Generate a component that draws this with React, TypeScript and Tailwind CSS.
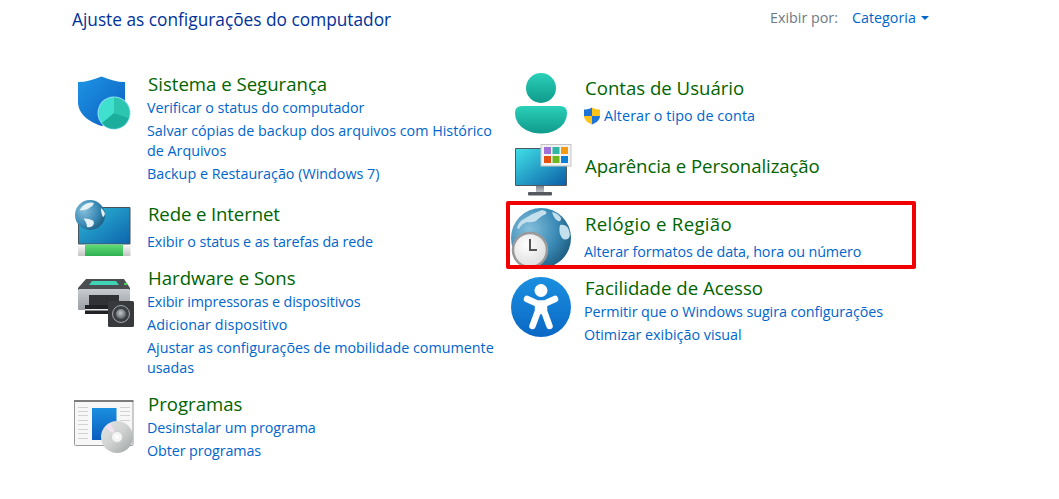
import React from "react";

const Title = ({ children, className = "" }: { children: React.ReactNode; className?: string }) => (
  <div className={"text-[18.6px] leading-[24px] text-[#006400] ml-[1px] " + className}>{children}</div>
);
const L = ({ children, className = "" }: { children: React.ReactNode; className?: string }) => (
  <div className={"text-[14.33px] leading-[20px] text-[#0066cc] mt-[3px] " + className}>{children}</div>
);

const clockLand = [
  "M6 20 Q8 13 13 11 Q22 5 31 2 Q37 3 35 6 Q30 8 27 11 Q24 15 16 14 Q10 16 8 21Z",
  "M41 4 Q47 5 50 10 Q50 14 47 13 Q43 11 41 4Z",
  "M49 17 Q54 16 57 20 Q60 26 58 30 Q54 33 51 30 Q47 24 49 17Z",
];
const netLand = [
  "M9 21 Q14 11 23 7 Q32 4 38 6 Q36 12 31 14 Q26 20 19 20 Q13 20 9 21Z",
  "M17 37 Q26 36 36 41 Q40 46 35 52 Q28 56 24 54 Q24 46 17 37Z",
  "M52 16 Q58 20 60 27 Q59 33 56 34 Q52 28 52 16Z",
];

const Globe = ({ cx, cy, r, id, land, landFill }: { cx: number; cy: number; r: number; id: string; land: string[]; landFill: string }) => (
  <g>
    <defs>
      <radialGradient id={id} cx="0.3" cy="0.35" r="0.85">
        <stop offset="0" stopColor="#86bfdb" />
        <stop offset="0.55" stopColor="#3a8ab6" />
        <stop offset="1" stopColor="#154f70" />
      </radialGradient>
    </defs>
    <circle cx={cx} cy={cy} r={r} fill={`url(#${id})`} />
    <g fill={landFill} transform={`translate(${cx} ${cy}) scale(${r / 30}) translate(-30 -30)`}>
      {land.map((d) => <path key={d} d={d} />)}
    </g>
  </g>
);

const ShieldIcon = () => (
  <svg width="64" height="64" viewBox="0 0 64 64" className="shrink-0">
    <defs>
      <linearGradient id="sh" x1="0" y1="0" x2="1" y2="1">
        <stop offset="0" stopColor="#1e94e4" />
        <stop offset="1" stopColor="#0a5fc0" />
      </linearGradient>
    </defs>
    <path d="M6 10 C14 10 21 8 29.500 4.500 C38 8 45 10 53 10 V30 C53 42 42 50 29.500 54 C17 50 6 42 6 30Z" fill="url(#sh)" />
    <circle cx="42" cy="41" r="16.500" fill="#8fdcf0" />
    <circle cx="42" cy="41" r="15.500" fill="#40e0cf" />
    <path d="M42 41 V25.500 A15.500 15.500 0 0 1 56.800 46Z" fill="#2cc5b0" />
    <path d="M42 41 L56.800 46 A15.500 15.500 0 0 1 30 51Z" fill="#1cae9c" />
  </svg>
);

const NetIcon = () => (
  <svg width="64" height="64" viewBox="0 0 64 64" className="shrink-0 overflow-visible">
    <defs>
      <linearGradient id="nm" x1="0" y1="0" x2="1" y2="1">
        <stop offset="0" stopColor="#2fb9d6" />
        <stop offset="1" stopColor="#0d65ad" />
      </linearGradient>
      <linearGradient id="ng" x1="0" y1="0" x2="0" y2="1">
        <stop offset="0" stopColor="#62dc78" />
        <stop offset="1" stopColor="#2eb050" />
      </linearGradient>
      <linearGradient id="nb" x1="0" y1="0" x2="0" y2="1">
        <stop offset="0" stopColor="#f2f2f2" />
        <stop offset="1" stopColor="#c4c4c4" />
      </linearGradient>
    </defs>
    <rect x="6" y="5" width="52.500" height="37.500" rx="1" fill="#46525c" />
    <rect x="7" y="6" width="50.500" height="35.500" fill="url(#nm)" />
    <rect x="6" y="44" width="52.500" height="10" fill="url(#nb)" />
    <path d="M13 42.500 H51 V54 H13Z" fill="url(#ng)" />
    <Globe id="ng1" cx={18} cy={13} r={15} land={netLand} landFill="#e6f1f5" />
  </svg>
);

const PrinterIcon = () => (
  <svg width="64" height="64" viewBox="0 0 64 64" className="shrink-0">
    <defs>
      <linearGradient id="pb" x1="0" y1="0" x2="0" y2="1">
        <stop offset="0" stopColor="#c8ccd0" />
        <stop offset="1" stopColor="#9a9ea2" />
      </linearGradient>
      <radialGradient id="ps" cx="0.45" cy="0.4" r="0.6">
        <stop offset="0" stopColor="#c2c8cc" />
        <stop offset="1" stopColor="#5a5f64" />
      </radialGradient>
    </defs>
    <path d="M14 13 H52 L58 22 V42 Q58 44 56 44 H8 Q6 44 6 42 V22Z" fill="#4a4d52" />
    <path d="M20 15 H44 L47 19 H17Z" fill="#3fd2b4" />
    <rect x="6" y="23" width="52" height="21" rx="1.500" fill="url(#pb)" />
    <rect x="17" y="29" width="30" height="15" fill="#303236" />
    <rect x="13" y="39" width="36" height="9" fill="#202226" />
    <rect x="13" y="43" width="36" height="1.500" fill="#e8e8e8" />
    <rect x="52" y="17" width="3" height="2" fill="#4fd05a" />
    <rect x="36" y="35" width="26" height="26" rx="1.500" fill="#37393d" />
    <circle cx="49" cy="48" r="8.500" fill="#3c3f44" stroke="#b0b4b8" strokeWidth="0.900" />
    <circle cx="49" cy="48" r="5" fill="url(#ps)" />
  </svg>
);

const ProgIcon = () => (
  <svg width="64" height="64" viewBox="0 0 64 64" className="shrink-0">
    <defs>
      <linearGradient id="pg" x1="0" y1="0" x2="0" y2="1">
        <stop offset="0" stopColor="#1b8fe0" />
        <stop offset="1" stopColor="#0a5dbd" />
      </linearGradient>
      <linearGradient id="cd" x1="0" y1="0" x2="1" y2="1">
        <stop offset="0" stopColor="#e4e6e6" />
        <stop offset="0.5" stopColor="#cfd2d1" />
        <stop offset="1" stopColor="#9ea2a2" />
      </linearGradient>
    </defs>
    <rect x="2.500" y="8.500" width="58.500" height="45" rx="1" fill="#f7f7f7" stroke="#9a9a9a" />
    <rect x="2" y="8" width="59.500" height="2" fill="#7d7d7d" />
    <rect x="20" y="16" width="24.500" height="32" fill="url(#pg)" />
    <g fill="#d2d2d2">
      <rect x="6" y="15" width="10" height="1" /><rect x="6" y="19" width="10" height="1" />
      <rect x="6" y="23" width="10" height="1" /><rect x="6" y="28" width="10" height="1" />
      <rect x="6" y="32" width="10" height="1" /><rect x="6" y="37" width="10" height="1" />
      <rect x="6" y="41" width="10" height="1" /><rect x="6" y="46" width="10" height="1" />
      <rect x="48" y="15" width="10" height="1" /><rect x="48" y="19" width="10" height="1" />
      <rect x="48" y="23" width="10" height="1" /><rect x="48" y="28" width="10" height="1" />
    </g>
    <circle cx="45" cy="45" r="16" fill="url(#cd)" />
    <path d="M45 45 L33 35 A16 16 0 0 1 38 31Z" fill="#f0e0f0" />
    <circle cx="45" cy="45" r="5.500" fill="#f4f4f4" stroke="#c0c0c0" strokeWidth="0.600" />
    <circle cx="45" cy="45" r="2" fill="#fff" />
  </svg>
);

const UserIcon = () => (
  <svg width="64" height="64" viewBox="0 0 64 64" className="shrink-0 overflow-visible">
    <defs>
      <linearGradient id="ua" x1="0" y1="0" x2="0" y2="1">
        <stop offset="0" stopColor="#2ad0b8" />
        <stop offset="1" stopColor="#0f9a8c" />
      </linearGradient>
    </defs>
    <circle cx="31" cy="12" r="15" fill="url(#ua)" />
    <path d="M12 30 H50 Q57 30 57 37 Q57 48 46 54 Q39 57.500 31 57.500 Q23 57.500 16 54 Q5 48 5 37 Q5 30 12 30Z" fill="url(#ua)" />
  </svg>
);

const MonitorIcon = () => (
  <svg width="64" height="64" viewBox="0 0 64 64" className="shrink-0">
    <defs>
      <linearGradient id="mm" x1="0" y1="0" x2="1" y2="1">
        <stop offset="0" stopColor="#3fdfe6" />
        <stop offset="1" stopColor="#0c5fa8" />
      </linearGradient>
      <linearGradient id="ms" x1="0" y1="0" x2="0" y2="1">
        <stop offset="0" stopColor="#808890" />
        <stop offset="1" stopColor="#c8cdd2" />
      </linearGradient>
    </defs>
    <rect x="5" y="4" width="52" height="38" rx="1" fill="#4f5860" />
    <rect x="6" y="5" width="50" height="36" fill="url(#mm)" />
    <rect x="26" y="42" width="8" height="7" fill="url(#ms)" />
    <rect x="18" y="48" width="24" height="3.500" rx="1" fill="#55595e" />
    <rect x="31" y="0.500" width="30" height="21.500" fill="#f2f2f2" stroke="#c4c4c4" />
    <rect x="34" y="3" width="7" height="7" fill="#a070d8" />
    <rect x="42.500" y="3" width="7" height="7" fill="#2cb8a4" />
    <rect x="51" y="3" width="7" height="7" fill="#f39a12" />
    <rect x="34" y="12" width="7" height="7" fill="#e44f12" />
    <rect x="42.500" y="12" width="7" height="7" fill="#6cb81e" />
    <rect x="51" y="12" width="7" height="7" fill="#0a80d8" />
  </svg>
);

const ClockGlobeIcon = () => (
  <svg width="64" height="64" viewBox="0 0 64 64" className="shrink-0">
    <defs>
      <radialGradient id="cf" cx="0.4" cy="0.35" r="0.7">
        <stop offset="0" stopColor="#ffffff" />
        <stop offset="1" stopColor="#dcdcdc" />
      </radialGradient>
    </defs>
    <Globe id="cg" cx={31} cy={33} r={30} land={clockLand} landFill="#c3e0ec" />
    <circle cx="20" cy="45" r="17" fill="url(#cf)" stroke="#9a9a9a" strokeWidth="2.500" />
    <path d="M20 34 V45 H27" fill="none" stroke="#555" strokeWidth="2" />
  </svg>
);

const AccessIcon = () => (
  <svg width="64" height="70" viewBox="0 0 64 70" className="shrink-0">
    <defs>
      <linearGradient id="ac" x1="0" y1="0" x2="0" y2="1">
        <stop offset="0" stopColor="#1a8fe0" />
        <stop offset="1" stopColor="#0a68c4" />
      </linearGradient>
    </defs>
    <circle cx="31" cy="38" r="30" fill="url(#ac)" />
    <circle cx="31" cy="21.500" r="6.500" fill="#fff" />
    <path d="M17 30 L27 34.500 H35 L45 30 M28 34.500 V42 L22.500 57 M34 34.500 V42 L39.500 57 M28 42 H34" fill="none" stroke="#fff" strokeWidth="6.500" strokeLinecap="round" strokeLinejoin="round" />
  </svg>
);

const SmallShield = () => (
  <svg width="18" height="18" viewBox="0 0 18 18" className="shrink-0">
    <path d="M9 0.500 C6.500 2 4 2.500 1 2.500 V9 H9Z" fill="#1f74d8" />
    <path d="M9 17.500 C13 16 17 13 17 9 H9Z" fill="#1f74d8" />
    <path d="M9 0.500 C11.500 2 14 2.500 17 2.500 V9 H9Z" fill="#fcc419" />
    <path d="M1 9 H9 V17.500 C5 16 1 13 1 9Z" fill="#fcc419" />
  </svg>
);

const Row = ({ h, w, icon, children, className = "" }: { h: string; w: string; icon: React.ReactNode; children: React.ReactNode; className?: string }) => (
  <div className={`flex ${h} ${className}`}>
    <div className={`${w} shrink-0`}>{icon}</div>
    <div className="min-w-0 flex-1">{children}</div>
  </div>
);

export default function App() {
  return (
    <div className="w-[1059px] h-[499px] bg-white overflow-hidden" style={{ fontFamily: '"Open Sans", "Noto Sans", sans-serif' }}>
      <div className="h-[72px] flex items-start pl-[72px] pt-[7px]">
        <div className="text-[17.3px] leading-[26px] text-[#003399] w-[698px]">Ajuste as configurações do computador</div>
        <div className="flex items-center text-[14.3px] leading-[24px] -mt-[1px]">
          <span className="text-[#6d7a86] w-[82px]">Exibir por:</span>
          <span className="text-[#0066cc]">Categoria</span>
          <span className="ml-[5px] w-0 h-0 border-x-[4px] border-x-transparent border-t-[4px] border-t-[#0066cc]"></span>
        </div>
      </div>
      <div className="flex pl-[72px]">
        <div className="w-[434px] shrink-0 pr-[8px]">
          <Row h="h-[130px]" w="w-[75px]" icon={<ShieldIcon />}>
            <Title>Sistema e Segurança</Title>
            <L className="!mt-[2px] tracking-[-0.06px]">Verificar o status do computador</L>
            <L>Salvar cópias de backup dos arquivos com Histórico de Arquivos</L>
            <L>Backup e Restauração (Windows 7)</L>
          </Row>
          <Row h="h-[64px]" w="w-[75px]" icon={<NetIcon />}>
            <Title className="tracking-[-0.12px]">Rede e Internet</Title>
            <L className="!mt-[6px] tracking-[-0.1px]">Exibir o status e as tarefas da rede</L>
          </Row>
          <Row h="h-[126px]" w="w-[75px]" icon={<PrinterIcon />}>
            <Title>Hardware e Sons</Title>
            <L className="!mt-[2px] tracking-[-0.12px]">Exibir impressoras e dispositivos</L>
            <L className="tracking-[0.1px]">Adicionar dispositivo</L>
            <L>Ajustar as configurações de mobilidade comumente usadas</L>
          </Row>
          <Row h="h-[72px]" w="w-[75px]" icon={<ProgIcon />}>
            <Title>Programas</Title>
            <L className="!mt-[2px] tracking-[-0.08px]">Desinstalar um programa</L>
            <L className="tracking-[-0.1px]">Obter programas</L>
          </Row>
        </div>
        <div className="w-[410px] shrink-0">
          <Row h="h-[82px]" w="w-[74px]" className="pl-[4px] pt-[4px]" icon={<UserIcon />}>
            <Title>Contas de Usuário</Title>
            <div className="flex items-center mt-[6px] -ml-[1px]">
              <SmallShield />
              <span className="ml-[3px] text-[14.33px] leading-[20px] text-[#0066cc] tracking-[0.08px]">Alterar o tipo de conta</span>
            </div>
          </Row>
          <Row h="h-[47px]" w="w-[74px]" className="pl-[4px]" icon={<div className="-mt-[10px]"><MonitorIcon /></div>}>
            <Title className="tracking-[-0.08px]">Aparência e Personalização</Title>
          </Row>
          <Row h="h-[68px]" w="w-[74px]" className="border-4 border-[#f00000] rounded-[2px] overflow-hidden" icon={<ClockGlobeIcon />}>
            <div className="pt-[7px]">
              <Title className="tracking-[0.3px]">Relógio e Região</Title>
              <L className="!mt-[6px] tracking-[-0.1px]">Alterar formatos de data, hora ou número</L>
            </div>
          </Row>
          <Row h="h-[72px]" w="w-[74px]" className="pl-[4px]" icon={<AccessIcon />}>
            <div className="pt-[7px]">
              <Title>Facilidade de Acesso</Title>
              <L className="!mt-[2px] tracking-[-0.07px]">Permitir que o Windows sugira configurações</L>
              <L>Otimizar exibição visual</L>
            </div>
          </Row>
        </div>
      </div>
    </div>
  );
}
